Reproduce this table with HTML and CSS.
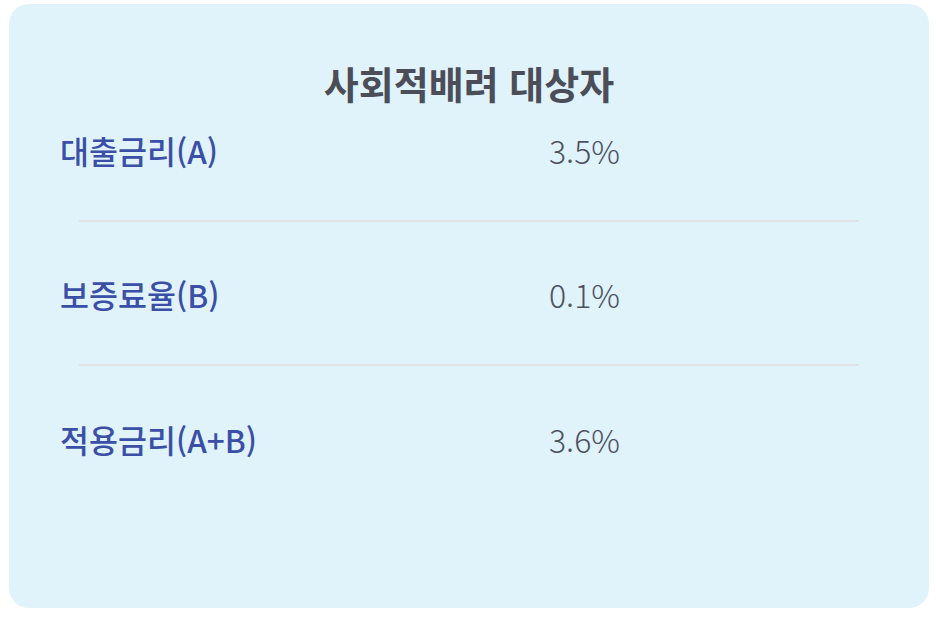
FILE: index.html
```html
<!DOCTYPE html>
<html lang="ko">
<head>
    <meta charset="UTF-8">
    <meta name="viewport" content="width=device-width, initial-scale=1.0">
    <title>사회적배려 대상자 금리</title>
    <link rel="stylesheet" href="styles.css">
</head>
<body>
    <div class="rate-card">
        <h2 class="rate-title">사회적배려 대상자</h2>
        <div class="rate-row">
            <span class="rate-label">대출금리(A)</span>
            <span class="rate-value">3.5%</span>
        </div>
        <div class="divider divider-first"></div>
        <div class="rate-row">
            <span class="rate-label">보증료율(B)</span>
            <span class="rate-value">0.1%</span>
        </div>
        <div class="divider"></div>
        <div class="rate-row">
            <span class="rate-label">적용금리(A+B)</span>
            <span class="rate-value">3.6%</span>
        </div>
    </div>
</body>
</html>
```

FILE: styles.css
```css
body {
    margin: 0;
    background-color: #ffffff;
    font-family: "Noto Sans CJK KR", "Noto Sans", sans-serif;
}
.rate-card {
    box-sizing: border-box;
    width: 920px;
    height: 604px;
    margin: 4px 0 0 9px;
    padding-top: 55px;
    background-color: #e0f3fb;
    border-radius: 20px;
}
.rate-title {
    margin: 0 0 22px;
    text-align: center;
    font-size: 38px;
    line-height: 48px;
    font-weight: 700;
    color: #4b4d59;
}
.rate-row {
    display: grid;
    grid-template-columns: 489px 1fr;
    padding-left: 51px;
    height: 42px;
    line-height: 42px;
}
.rate-label {
    font-size: 31.5px;
    font-weight: 500;
    color: #3b4fa6;
}
.rate-value {
    font-size: 32px;
    font-weight: 300;
    color: #4d5261;
}
.divider {
    height: 2px;
    margin: 49px 70px 52px;
    background-color: #e0e4e8;
}
.divider-first {
    margin-bottom: 51px;
}
```
